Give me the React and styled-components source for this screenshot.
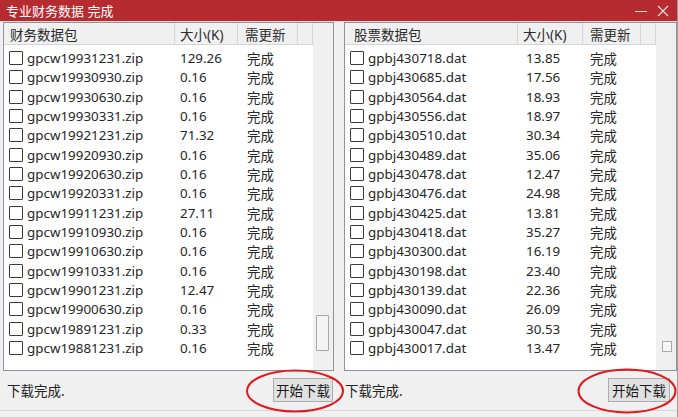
import React from "react";
import styled, { createGlobalStyle } from "styled-components";

const GlobalStyle = createGlobalStyle`
  html, body {
    margin: 0;
    padding: 0;
    background: #f0f0f0;
  }
  * {
    box-sizing: border-box;
  }
`;

const FONT = `"Noto Sans", "Noto Sans CJK SC", sans-serif`;

const financeRows = [
  ["gpcw19931231.zip", "129.26"],
  ["gpcw19930930.zip", "0.16"],
  ["gpcw19930630.zip", "0.16"],
  ["gpcw19930331.zip", "0.16"],
  ["gpcw19921231.zip", "71.32"],
  ["gpcw19920930.zip", "0.16"],
  ["gpcw19920630.zip", "0.16"],
  ["gpcw19920331.zip", "0.16"],
  ["gpcw19911231.zip", "27.11"],
  ["gpcw19910930.zip", "0.16"],
  ["gpcw19910630.zip", "0.16"],
  ["gpcw19910331.zip", "0.16"],
  ["gpcw19901231.zip", "12.47"],
  ["gpcw19900630.zip", "0.16"],
  ["gpcw19891231.zip", "0.33"],
  ["gpcw19881231.zip", "0.16"],
];

const stockRows = [
  ["gpbj430718.dat", "13.85"],
  ["gpbj430685.dat", "17.56"],
  ["gpbj430564.dat", "18.93"],
  ["gpbj430556.dat", "18.97"],
  ["gpbj430510.dat", "30.34"],
  ["gpbj430489.dat", "35.06"],
  ["gpbj430478.dat", "12.47"],
  ["gpbj430476.dat", "24.98"],
  ["gpbj430425.dat", "13.81"],
  ["gpbj430418.dat", "35.27"],
  ["gpbj430300.dat", "16.19"],
  ["gpbj430198.dat", "23.40"],
  ["gpbj430139.dat", "22.36"],
  ["gpbj430090.dat", "26.09"],
  ["gpbj430047.dat", "30.53"],
  ["gpbj430017.dat", "13.47"],
];

const Window = styled.div`
  position: relative;
  width: 678px;
  height: 417px;
  overflow: hidden;
  background: #f0f0f0;
  font-family: ${FONT};
  border-right: 1px solid #9c9c9c;
`;

const TitleBar = styled.div`
  height: 22px;
  background: #b52b30;
  display: flex;
  align-items: center;
  justify-content: space-between;
  padding: 0 6px 0 6px;
  color: #fff;
  font-size: 13px;
  border-bottom: 1px solid #e9d6d6;
`;

const Controls = styled.div`
  display: flex;
  align-items: center;
  gap: 10px;
  padding-right: 2px;
`;

const Body = styled.div`
  display: flex;
  padding-left: 3px;
  gap: 10px;
  height: 388px;
`;

const Panel = styled.div`
  width: ${(p) => p.$width}px;
  display: flex;
  flex-direction: column;
`;

const ListBox = styled.div`
  height: 349px;
  display: flex;
  border: 1px solid #8f949c;
`;

const Content = styled.div`
  flex: 1;
  background: #fff;
`;

const Track = styled.div`
  width: 20px;
  background: #f0f0f0;
  position: relative;
`;

const Thumb = styled.div`
  position: absolute;
  left: 3px;
  top: ${(p) => p.$top}px;
  width: 13px;
  height: 36px;
  background: #f4f4f4;
  border: 1px solid #a7a7a7;
  border-radius: 1px;
`;

const Grip = styled.div`
  position: absolute;
  left: 6px;
  top: ${(p) => p.$top}px;
  width: 10px;
  height: 11px;
  background: #f6f6f6;
  border: 1px solid #a9a9a9;
`;

const Header = styled.div`
  display: grid;
  grid-template-columns: ${(p) => p.$cols};
  height: 22px;
  background: #f0f0f0;
`;

const HeadCell = styled.div`
  display: flex;
  align-items: center;
  padding-left: ${(p) => p.$pad ?? 6}px;
  font-size: 13.5px;
  color: #2b2b2b;
  border-right: 1px solid #d6d6d6;
  border-bottom: 1px solid #d6d6d6;
  background: #f0f0f0;
  white-space: nowrap;
  overflow: hidden;
`;

const Rows = styled.div`
  padding-top: 3px;
`;

const Row = styled.div`
  display: grid;
  grid-template-columns: ${(p) => p.$cols};
  height: 19.33px;
  align-items: center;
  font-size: 13.4px;
  color: #262626;
  white-space: nowrap;
`;

const NameCell = styled.div`
  display: flex;
  align-items: center;
  padding-left: 5px;
  gap: 4px;
`;

const Box = styled.span`
  display: inline-block;
  width: 14px;
  height: 14px;
  border: 1.5px solid #3a3a3a;
  background: #fff;
  border-radius: 1px;
`;

const Cell = styled.div`
  padding-left: ${(p) => p.$pad}px;
`;

const StatusRow = styled.div`
  flex: 1;
  display: flex;
  align-items: center;
  justify-content: space-between;
  padding: 0 ${(p) => p.$right}px 2px ${(p) => p.$left}px;
  font-size: 13.5px;
  color: #222;
`;

const Button = styled.button`
  width: ${(p) => p.$width}px;
  height: 24px;
  margin-top: 1px;
  background: #e1e1e1;
  border: 1px solid #adadad;
  font-family: ${FONT};
  font-size: 13.5px;
  color: #1a1a1a;
  padding: 0;
`;

const BottomBar = styled.div`
  height: 7px;
  border-top: 1px solid #d9d9d9;
  background: #f0f0f0;
`;

const Marks = styled.svg`
  position: absolute;
  left: 0;
  top: 0;
  pointer-events: none;
`;

function FileList({ title, rows, cols, sizePad, statePad, headPad, thumbTop, gripTop }) {
  return (
    <ListBox>
      <Content>
        <Header $cols={cols}>
          <HeadCell $pad={headPad}>{title}</HeadCell>
          <HeadCell $pad={5}>大小(K)</HeadCell>
          <HeadCell $pad={7}>需更新</HeadCell>
          <HeadCell />
        </Header>
        <Rows>
          {rows.map(([name, size]) => (
            <Row key={name} $cols={cols}>
              <NameCell>
                <Box />
                {name}
              </NameCell>
              <Cell $pad={sizePad}>{size}</Cell>
              <Cell $pad={statePad}>完成</Cell>
            </Row>
          ))}
        </Rows>
      </Content>
      <Track>
        {thumbTop != null && <Thumb $top={thumbTop} />}
        {gripTop != null && <Grip $top={gripTop} />}
      </Track>
    </ListBox>
  );
}

export default function App() {
  return (
    <>
      <GlobalStyle />
      <Window>
        <TitleBar>
          <span>专业财务数据 完成</span>
          <Controls>
            <svg width="12" height="12" viewBox="0 0 12 12">
              <line x1="0" y1="6.5" x2="12" y2="6.5" stroke="#f3dede" strokeWidth="1" />
            </svg>
            <svg width="12" height="12" viewBox="0 0 12 12">
              <path d="M1 1 L11 11 M11 1 L1 11" stroke="#f3dede" strokeWidth="1.1" />
            </svg>
          </Controls>
        </TitleBar>
        <Body>
          <Panel $width={331}>
            <FileList
              title="财务数据包"
              rows={financeRows}
              cols="171px 63px 60px 15px"
              headPad={6}
              sizePad={5}
              statePad={9}
              thumbTop={292}
            />
            <StatusRow $left={4} $right={1}>
              <span>下载完成.</span>
              <Button $width={60}>开始下载</Button>
            </StatusRow>
          </Panel>
          <Panel $width={333}>
            <FileList
              title="股票数据包"
              rows={stockRows}
              cols="173px 65px 58px 15px"
              headPad={9}
              sizePad={8}
              statePad={7}
              gripTop={318}
            />
            <StatusRow $left={1} $right={7}>
              <span>下载完成.</span>
              <Button $width={62}>开始下载</Button>
            </StatusRow>
          </Panel>
        </Body>
        <BottomBar />
        <Marks width="678" height="417" viewBox="0 0 678 417">
          <ellipse cx="295" cy="391" rx="48" ry="20.5" fill="none" stroke="#e0191f" strokeWidth="2" />
          <ellipse cx="627" cy="391" rx="48.5" ry="21.5" fill="none" stroke="#e0191f" strokeWidth="2" />
        </Marks>
      </Window>
    </>
  );
}
